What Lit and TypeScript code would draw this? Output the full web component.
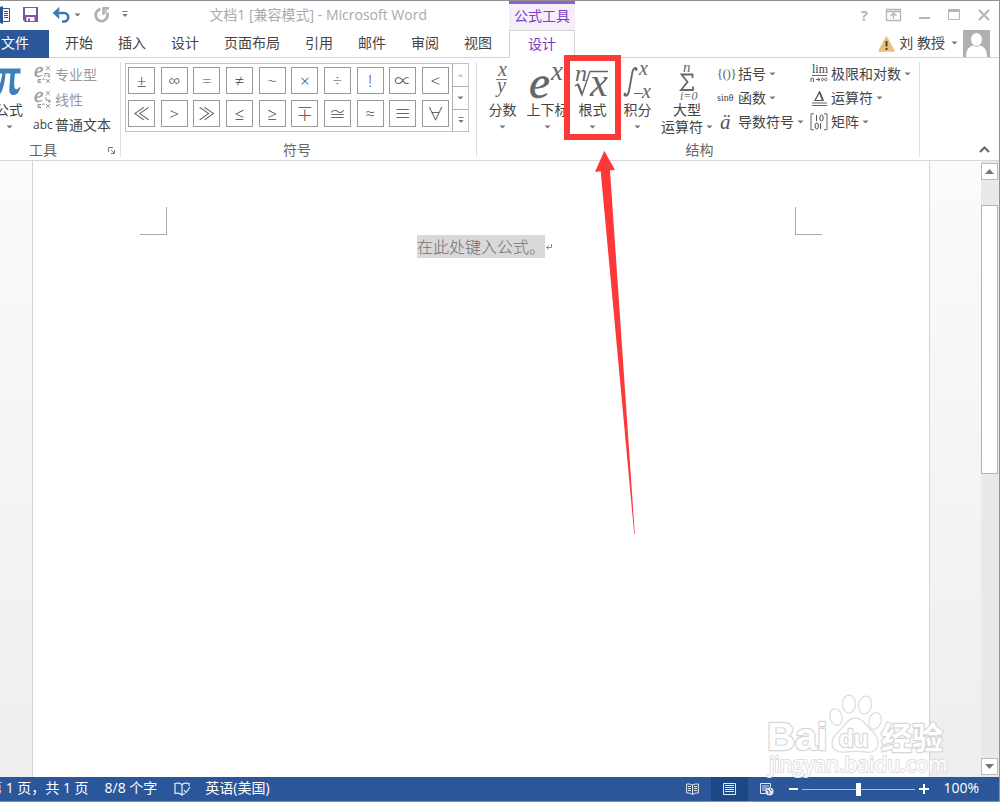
import { LitElement, html, svg, css } from "lit";
import { customElement } from "lit/decorators.js";

const caret = html`<svg class="caret" width="7" height="4" viewBox="0 0 7 4" aria-hidden="true"><path d="M0.5 0.5h6L3.5 3.6z" fill="currentColor" /></svg>`;

const pic = (w: number, h: number, body: unknown) =>
  html`<svg width=${w} height=${h} viewBox="0 0 ${w} ${h}" aria-hidden="true">${body}</svg>`;

const SYMBOLS = ["±", "∞", "=", "≠", "~", "×", "÷", "!", "∝", "<", "≪", ">", "≫", "≤", "≥", "∓", "≅", "≈", "≡", "∀"];
const TABS = ["开始", "插入", "设计", "页面布局", "引用", "邮件", "审阅", "视图"];

const wordIcon = pic(10, 18, svg`
  <path d="M3 2.500h6.500v13H3" fill="#fff" stroke="#2b579a"/>
  <path d="M4 5.500h4M4 7.500h4M4 9.500h4M4 11.500h4" stroke="#2b579a"/>
  <path d="M0 1l3-1v18l-3-1z" fill="#2b579a"/>`);
const saveIcon = pic(15, 15, svg`
  <path d="M0 0h15v15H2l-2-2z" fill="#8055a8"/>
  <path d="M2 1h11v7H2z" fill="#fff"/>
  <path d="M3.500 10h8v4h-8z" fill="#fff"/><path d="M5 11.500h2V14H5z" fill="#8055a8"/>`);
const undoIcon = pic(18, 16, svg`
  <path d="M2 6h9a4 4 0 0 1 0 8.500H9" fill="none" stroke="#3d77b4" stroke-width="2.600"/>
  <path d="M0 6l6-5.500v3L4 6l2 2.500v3z" fill="#3d77b4" stroke="#3d77b4" stroke-width=".6"/>`);
const redoIcon = pic(16, 16, svg`
  <path d="M6.500 2.200A6 6 0 1 0 13 5.500" fill="none" stroke="#b0b0b0" stroke-width="2.800"/>
  <path d="M8.500 1.200h6.500M9.500 1.200v6.500" fill="none" stroke="#b0b0b0" stroke-width="2.400"/>
  <path d="M9 7.500l4-5" stroke="#b0b0b0" stroke-width="1.500"/>`);
const moreIcon = pic(6, 7, svg`<path d="M.5.500h5" stroke="#777"/><path d="M.3 3h5.400L3 6z" fill="#777"/>`);

const equationStyle = (arrow: unknown) => pic(18, 20, svg`
  <g font-family="Liberation Serif" font-style="italic" fill="#999" stroke="#999" stroke-width=".3">
    <text x="0" y="12" font-size="21">e</text></g>
  <path d="M12 1l4 4.500M16 1l-4 4.500M4 14.500h3M4 14.500v3h3M4 16h2.500M8.500 15l1-1.500 1 1.500M12 14l4 4M16 14l-4 4" fill="none" stroke="#999"/>
  ${arrow}`);
const proIcon = equationStyle(svg`<path d="M11 12V8.500h4V12M13.500 10.500L15 12l1.500-1.500" stroke="#999" fill="none"/>`);
const linearIcon = equationStyle(svg`<path d="M12 7v3h3.500v2M13.500 10.500l2 2 1.500-2" stroke="#999" fill="none"/>`);
const piIcon = pic(28, 38, svg`
  <path d="M-2 9Q1 5.600 5 5.600h20.500v5H20c-.8 8-1.300 12-.3 14.300 1 2.300 3.300 1.600 4.600-.9l1 .5c-1 4.500-3.300 7.500-6.500 7.500-5 0-4.800-5-4.200-10.500L15.500 10.600h-5C10 19 8 27 5.500 30.500c-2 2.600-6 1.800-5-1.500C4 25 6.500 18 7.300 10.600H3L-2 13z" fill="#3d7ebb"/>`);

const math = (body: unknown) => svg`<g font-family="Liberation Serif" font-style="italic" fill="#666">${body}</g>`;

const fractionIcon = pic(16, 36, math(svg`
  <text x="3" y="12" font-size="20">x</text><text x="2" y="28" font-size="20">y</text>
  <path d="M1 15.500h11" stroke="#777"/>`));
const scriptIcon = pic(38, 36, math(svg`
  <text x="0" y="34" font-size="47" stroke="#666" stroke-width=".5">e</text><text x="22" y="16" font-size="27">x</text>`));
const radicalIcon = pic(38, 36, math(svg`
  <text x="1" y="17" font-size="24">n</text><text x="16" y="32" font-size="40">x</text>
  <path d="M1 22l3-2 4 11L16 7.500h18" fill="none" stroke="#666" stroke-width="1.400"/>
  <path d="M4 20.500L8 30" stroke="#666" stroke-width="2.200"/>`));
const integralIcon = pic(32, 36, math(svg`
  <path d="M15 5.500c-1-2.500-3.800-2-4.500 2L7 27c-.8 5-3.500 6-5 3.500" fill="none" stroke="#666" stroke-width="1.800"/>
  <circle cx="14" cy="5.500" r="1.300"/><circle cx="3" cy="30" r="1.300"/>
  <text x="17" y="11" font-size="20">x</text><path d="M12 29.500h9" stroke="#666"/>
  <text x="20" y="34" font-size="20">x</text>`));
const sumIcon = pic(18, 38, math(svg`
  <text x="5" y="9" font-size="15">n</text>
  <path d="M14.500 15v-3.500H3.500L9.500 19l-6.500 8h12v-3.500" fill="none" stroke="#666" stroke-width="1.800"/>
  <text x="2" y="37" font-size="12">i=0</text>`));

const bracketIcon = pic(18, 18, svg`<text x="0" y="13" font-family="Liberation Serif" font-size="12" fill="#555">{()}</text>`);
const sinIcon = pic(18, 18, svg`<text x="0" y="12" font-family="Liberation Serif" font-size="10" fill="#444">sinθ</text>`);
const accentIcon = pic(18, 18, svg`<text x="3" y="16" font-family="Liberation Serif" font-style="italic" font-size="21" fill="#555">ä</text>`);
const limitIcon = pic(18, 18, svg`
  <text x="2" y="8" font-family="Liberation Serif" font-size="12" fill="#444">lim</text>
  <path d="M2 10.500h15" stroke="#666"/>
  <path d="M1 13v4M1 14q2-2 2.500 0V17M6 14.500h4M8 13l2 1.500L8 16M14 14.500c-1.500-2-2.500-1.500-2.500 0s1 2 2.500 0 3-1.500 3 0-1.500 2-3 0" fill="none" stroke="#555" stroke-width=".9"/>`);
const operatorIcon = pic(18, 18, svg`
  <path d="M5 11.500h8L9.500 3z" fill="none" stroke="#555" stroke-width="1.200"/><path d="M9.500 3l3.500 8.500" stroke="#555" stroke-width="1.800"/>
  <path d="M2 14h15M2 16.500h15" stroke="#666"/>`);
const matrixIcon = pic(18, 18, svg`
  <path d="M4 .8H1v16h3M14 .8h3v16h-3" fill="none" stroke="#666"/>
  <path d="M6.500 2v6M10.500 10v6" stroke="#555"/>
  <ellipse cx="11.500" cy="5" rx="1.700" ry="3" fill="none" stroke="#555"/><ellipse cx="6.800" cy="13" rx="1.700" ry="3" fill="none" stroke="#555"/>`);

const BIG = [
  { icon: fractionIcon, label: "分数" },
  { icon: scriptIcon, label: "上下标" },
  { icon: radicalIcon, label: "根式", marked: true },
  { icon: integralIcon, label: "积分" },
];
const SMALL = [
  [bracketIcon, "括号"], [limitIcon, "极限和对数"],
  [sinIcon, "函数"], [operatorIcon, "运算符"],
  [accentIcon, "导数符号"], [matrixIcon, "矩阵"],
] as const;

@customElement("app-root")
export class AppRoot extends LitElement {
  static styles = css`
    :host { display: block; font-family: "Open Sans", "Noto Sans CJK SC", sans-serif; font-size: 14px; line-height: 18px; color: #444; }
    * { box-sizing: border-box; }
    button { font: inherit; color: inherit; background: none; border: 0; padding: 0; margin: 0; white-space: nowrap; }
    svg { display: block; flex: none; overflow: visible; }
    .caret { color: #777; }
    .window { position: relative; height: 100vh; display: flex; flex-direction: column; overflow: hidden; background: #fff; border: solid #919191; border-width: 1px 1px 1px 0; }

    .header { display: grid; grid-template-columns: max-content 66px 1fr; grid-template-rows: 29px 28px; flex: none; }
    .title-left { display: flex; align-items: center; justify-content: space-between; padding: 0 82px 2px 0; }
    .quick { display: flex; align-items: center; }
    .quick button { display: flex; align-items: center; height: 24px; }
    .quick .save { margin-left: 13px; }
    .quick .undo { margin-left: 15px; gap: 3px; }
    .quick .redo { margin-left: 13px; }
    .quick .more { margin-left: 12px; }
    .title { margin: 0; font-size: 14px; font-weight: 400; color: #aaa; white-space: nowrap; }
    .context { background: #f5effc; border-top: 3px solid #9160d0; color: #7d3fc0; text-align: center; line-height: 24px; }
    .controls { display: flex; align-items: center; justify-content: flex-end; gap: 18px; padding: 0 9px 2px 0; color: #b5b5b5; }
    .controls .help { font-weight: 700; font-size: 15px; line-height: 20px; }
    .tabs { display: flex; gap: 25px; border-bottom: 1px solid #d4d4d4; padding-right: 17px; }
    .tabs button { padding-bottom: 2px; }
    .tabs .file { background: #2b579a; color: #fff; width: 49px; height: 28px; margin-right: -9px; text-align: left; padding-left: 1px; }
    .active { border: 1px solid #d4d4d4; border-bottom: 0; color: #7536bd; padding-bottom: 2px; }
    .account { display: flex; align-items: center; justify-content: flex-end; border-bottom: 1px solid #d4d4d4; padding-right: 9px; }
    .account button { display: flex; align-items: center; gap: 5px; }
    .account .avatar { margin-left: 5px; }
    .account .name { gap: 6px; margin-left: 4px; padding-bottom: 2px; }

    .ribbon { display: flex; flex: none; padding: 4px 0 3px; border-bottom: 1px solid #d8d8d8; }
    .group { display: flex; flex-direction: column; height: 95px; border-right: 1px solid #dedede; }
    .body { flex: 1; display: flex; }
    .caption { display: flex; align-items: center; justify-content: center; line-height: 14px; color: #666; }
    .tools .caption { justify-content: space-between; padding: 0 5px 0 29px; }
    .big { width: 45px; display: flex; flex-direction: column; align-items: center; }
    .big .art { height: 39px; display: flex; align-items: center; }
    .big .foot { height: 16px; display: flex; align-items: center; gap: 3px; }
    .big.wide { width: 54px; }
    .big.equation { width: 28px; margin-left: -5px; }
    .list { margin-left: 11px; padding-right: 9px; }
    .list button, .grid button { display: flex; align-items: center; gap: 3px; height: 25px; }
    .list .off { color: #999; }
    .grid button { height: 24px; }
    .symbols { padding: 0 7px 0 4px; }
    .gallery { display: flex; border: 1px solid #c3c3c3; height: 69px; margin-top: 1px; width: 344px; }
    .cells { flex: 1; display: grid; grid-template-columns: repeat(10, 27px); grid-template-rows: 27px 27px; row-gap: 6px; justify-content: space-between; align-content: start; padding: 3px 3px 0 2px; }
    .cells button { border: 1px solid #999; font-family: "Open Sans", "Noto Sans CJK SC", "DejaVu Sans", sans-serif; font-weight: 300; font-size: 17px; line-height: 25px; color: #444; text-align: center; }
    .spin { width: 16px; display: grid; grid-template-rows: repeat(3, 1fr); border-left: 1px solid #b0b0b0; }
    .spin button { display: flex; align-items: center; justify-content: center; }
    .spin button + button { border-top: 1px solid #b0b0b0; }
    .spin .dim { opacity: .4; transform: rotate(180deg); }
    .structures { padding-left: 3px; }
    .grid { display: grid; grid-template-columns: 93px 109px; align-content: start; padding-left: 3px; }
    .marked { position: relative; }
    .marked::after { content: ""; position: absolute; inset: -7px -6px 3px -6px; border: 6px solid #fd3838; z-index: 2; pointer-events: none; }
    .collapse { margin: auto 9px 4px auto; }

    .workspace { flex: 1; min-height: 0; display: flex; background: linear-gradient(#fbfbfb, #eee); }
    .page { flex: 1; margin: 0 51px 0 32px; background: #fff; border: solid #d4d4d4; border-width: 0 1px; padding: 46px 107px 0; }
    .corners { display: flex; justify-content: space-between; }
    .corner { width: 27px; height: 28px; border: solid #aaa; border-width: 0 1px 1px 0; }
    .corner.right { border-width: 0 0 1px 1px; }
    .line { display: flex; justify-content: center; align-items: center; margin: 0; font-size: 16px; line-height: 23px; color: #707070; font-family: "Noto Sans CJK SC", sans-serif; font-weight: 300; }
    .field { background: #d9d9d9; }
    .mark { width: 0; }
    .scroll { width: 18px; padding: 2px 1px 2px 0; display: flex; flex-direction: column; background: #e9e9e9; }
    .scroll button { height: 17px; display: flex; align-items: center; justify-content: center; background: #fff; border: 1px solid #bbb; }
    .track { flex: 1; display: flex; flex-direction: column; padding: 25px 0; }
    .thumb { height: 51%; background: #fff; border: 1px solid #b4b4b4; }

    .status { flex: none; height: 24px; display: flex; align-items: center; background: #2b579a; color: #fff; white-space: nowrap; }
    .status > span { padding-bottom: 2px; }
    .status button { height: 24px; display: flex; align-items: center; justify-content: center; }
    .status .pages { margin-left: -12px; }
    .status .words { margin: 0 17px 0 16px; }
    .status .lang { margin-left: 14px; }
    .views { display: flex; margin-left: auto; }
    .views button { width: 37px; }
    .views .on { background: #1d4885; }
    .zoom { display: flex; align-items: center; gap: 4px; margin-left: 4px; }
    .zoom input { appearance: none; width: 113px; height: 14px; margin: 0; background: linear-gradient(#a9bcd8, #a9bcd8) center / 100% 1px no-repeat; }
    .zoom input::-webkit-slider-thumb { appearance: none; width: 5px; height: 13px; background: #fff; }
    .percent { margin: 0 20px 0 14px; }

    .arrow { position: absolute; left: 595px; top: 149px; pointer-events: none; }
    .watermark { position: absolute; right: 58px; bottom: 26px; pointer-events: none; }
  `;

  private small(icon: unknown, label: string) {
    return html`<button>${icon}<span>${label}</span>${caret}</button>`;
  }

  private header() {
    return html`<header class="header">
      <div class="title-left">
        <div class="quick">
          ${wordIcon}
          <button class="save" aria-label="保存">${saveIcon}</button>
          <button class="undo" aria-label="撤消">${undoIcon}${caret}</button>
          <button class="redo" aria-label="恢复">${redoIcon}</button>
          <button class="more" aria-label="自定义">${moreIcon}</button>
        </div>
        <h1 class="title">文档1 [兼容模式] - Microsoft Word</h1>
      </div>
      <div class="context">公式工具</div>
      <div class="controls">
        <button class="help" aria-label="帮助">?</button>
        <button aria-label="功能区显示选项">${pic(15, 12, svg`<path d="M.5.500h14v11H.5zM1 2.500h13M7.500 10V4.500M4.500 7l3-3 3 3" fill="none" stroke="currentColor" stroke-width="1.300"/>`)}</button>
        <button aria-label="最小化">${pic(11, 12, svg`<path d="M0 9h11" stroke="currentColor" stroke-width="2"/>`)}</button>
        <button aria-label="最大化">${pic(12, 11, svg`<path d="M.5.500h11v10H.5z" fill="none" stroke="currentColor"/><path d="M0 1.500h12" stroke="currentColor" stroke-width="3"/>`)}</button>
        <button aria-label="关闭">${pic(12, 12, svg`<path d="M1 1l10 10M11 1L1 11" stroke="currentColor" stroke-width="2"/>`)}</button>
      </div>
      <nav class="tabs"><button class="file">文件</button>${TABS.map((t) => html`<button>${t}</button>`)}</nav>
      <button class="active">设计</button>
      <div class="account">
        ${pic(17, 16, svg`<path d="M8.500 1L16 15H1z" fill="#eabf7c" stroke="#eabf7c" stroke-width="1.500" stroke-linejoin="round"/><path d="M8.500 5v5.500M8.500 12v2" stroke="#444" stroke-width="2"/>`)}
        <button class="name">刘 教授 ${caret}</button>
        <button class="avatar" aria-label="账户">${pic(27, 27, svg`<path d="M0 0h27v27H0z" fill="#b0b0b0"/><ellipse cx="13.500" cy="9.500" rx="5.500" ry="6.500" fill="#fff"/><path d="M3 27c0-8 3-10 7-11.500q3.500 2.500 7 0c4 1.500 7 3.500 7 11.500z" fill="#fff"/>`)}</button>
      </div>
    </header>`;
  }

  private ribbon() {
    return html`<section class="ribbon">
      <div class="group tools">
        <div class="body">
          <button class="big equation"><span class="art">${piIcon}</span><span>公式</span><span class="foot">${caret}</span></button>
          <div class="list">
            <button class="off">${proIcon}<span>专业型</span></button>
            <button class="off">${linearIcon}<span>线性</span></button>
            <button>${pic(18, 18, svg`<text x="-1" y="13" font-size="12" fill="#444">abc</text>`)}<span>普通文本</span></button>
          </div>
        </div>
        <div class="caption"><span>工具</span><button aria-label="工具选项">${pic(7, 7, svg`<path d="M.5 5V.500H5M3 3l3 3M6.500 3v3.500H3" fill="none" stroke="#777"/>`)}</button></div>
      </div>
      <div class="group symbols">
        <div class="body"><div class="gallery">
          <div class="cells">${SYMBOLS.map((s) => html`<button>${s}</button>`)}</div>
          <div class="spin"><button class="dim" aria-label="上一行">${caret}</button><button aria-label="下一行">${caret}</button><button aria-label="其他">${moreIcon}</button></div>
        </div></div>
        <div class="caption">符号</div>
      </div>
      <div class="group structures">
        <div class="body">
          ${BIG.map((b) => html`<button class="big ${b.marked ? "marked" : ""}"><span class="art">${b.icon}</span><span>${b.label}</span><span class="foot">${caret}</span></button>`)}
          <button class="big wide"><span class="art">${sumIcon}</span><span>大型</span><span class="foot">运算符${caret}</span></button>
          <div class="grid">${SMALL.map(([i, l]) => this.small(i, l))}</div>
        </div>
        <div class="caption">结构</div>
      </div>
      <button class="collapse" aria-label="折叠功能区">${pic(11, 7, svg`<path d="M1 6l4.500-4.500L10 6" fill="none" stroke="#666" stroke-width="2"/>`)}</button>
    </section>`;
  }

  private workspace() {
    return html`<main class="workspace">
      <article class="page">
        <div class="corners"><span class="corner"></span><span class="corner right"></span></div>
        <p class="line"><span class="field">在此处键入公式。</span><span class="mark">${pic(8, 8, svg`<path d="M6.500 1v3.500H1.500M3.500 2.500l-2 2 2 2" fill="none" stroke="#888"/>`)}</span></p>
      </article>
      <div class="scroll">
        <button aria-label="向上滚动">${pic(9, 5, svg`<path d="M0 5h9L4.500 0z" fill="#777"/>`)}</button>
        <div class="track"><div class="thumb"></div></div>
        <button aria-label="向下滚动">${pic(9, 5, svg`<path d="M0 0h9L4.500 5z" fill="#777"/>`)}</button>
      </div>
    </main>`;
  }

  private status() {
    return html`<footer class="status">
      <span class="pages">第 1 页，共 1 页</span>
      <span class="words">8/8 个字</span>
      <button aria-label="校对">${pic(17, 14, svg`<path d="M8 2.500Q5 .500 1 1.500v10q4-1 7 1.500zM8 2.500Q11 .500 15 1.500V4M8 13q1-1 3-1.500M10 8l2 2.500L16 5" fill="none" stroke="#e6edf7" stroke-width="1.200"/>`)}</button>
      <span class="lang">英语(美国)</span>
      <div class="views">
        <button aria-label="阅读视图">${pic(13, 12, svg`<path d="M6.500 2Q4 .500 .6 1v9q3.400-.5 5.900 1.500Q9 9.500 12.400 10V1Q9 .500 6.500 2zv9.500M2 3.500h3M2 5.500h3M2 7.500h3M8 3.500h3M8 5.500h3M8 7.500h3" fill="none" stroke="#dfe8f5"/>`)}</button>
        <button class="on" aria-label="页面视图">${pic(13, 12, svg`<path d="M.5.500h12v11H.5zM2 2.500h9M2 4.500h9M2 6.500h9M2 8.500h9" fill="none" stroke="#dfe8f5"/>`)}</button>
        <button aria-label="Web 版式视图">${pic(14, 13, svg`<path d="M6 10.500H.5v-10h10V4M2 3h7M2 5h5M2 7h4" fill="none" stroke="#dfe8f5"/><circle cx="9.500" cy="8.500" r="4" fill="#dfe8f5"/><path d="M7 7l2 1v3M10 6l2 2" stroke="#2b579a" fill="none"/>`)}</button>
      </div>
      <div class="zoom">
        <button aria-label="缩小">${pic(9, 10, svg`<path d="M0 5h9" stroke="#fff" stroke-width="2"/>`)}</button>
        <input type="range" min="0" max="100" value="50" aria-label="显示比例" />
        <button aria-label="放大">${pic(10, 10, svg`<path d="M0 5h10M5 0v10" stroke="#fff" stroke-width="2"/>`)}</button>
      </div>
      <span class="percent">100%</span>
    </footer>`;
  }

  render() {
    return html`<div class="window">
      ${this.header()}${this.ribbon()}${this.workspace()}${this.status()}
      <svg class="arrow" width="42" height="386" viewBox="0 0 42 386" aria-hidden="true"><path d="M9.300 0.700L20 20l-5 .3L39.800 384h-.6L5.700 21.300 0 22z" fill="#fd3838" /></svg>
      <svg class="watermark" width="180" height="88" viewBox="0 0 180 88" aria-hidden="true">
        <g fill="#fff" stroke="#dedede" stroke-width="1.300">
          <ellipse cx="88" cy="17" rx="6.500" ry="9" /><ellipse cx="104" cy="18" rx="6.500" ry="9" transform="rotate(12 104 18)" />
          <ellipse cx="75" cy="30" rx="6" ry="8.500" transform="rotate(-15 75 30)" /><ellipse cx="114" cy="34" rx="6" ry="8.500" transform="rotate(18 114 34)" />
          <path d="M94 31c7 0 10 6 15 11s9 9 8 15c-1 8-7 9-13 8-7-1-13-1-20 0-7 1-13-2-13-9 0-6 5-10 9-14s7-11 14-11z" />
        </g>
        <g fill="#fff" stroke="#d6d6d6" stroke-width="2.400" paint-order="stroke" stroke-linejoin="round" font-weight="700">
          <text x="6" y="63" font-family="Liberation Sans" font-size="39">Bai</text>
          <text x="78" y="60" font-family="Liberation Sans" font-size="24">du</text>
          <text x="120" y="62" font-family="Noto Sans CJK SC" font-size="31">经验</text>
        </g>
        <text x="8" y="85" font-family="Open Sans" font-size="21" fill="#fff" stroke="#dedede" stroke-width="2" paint-order="stroke">jingyan.baidu.com</text>
      </svg>
    </div>`;
  }
}
